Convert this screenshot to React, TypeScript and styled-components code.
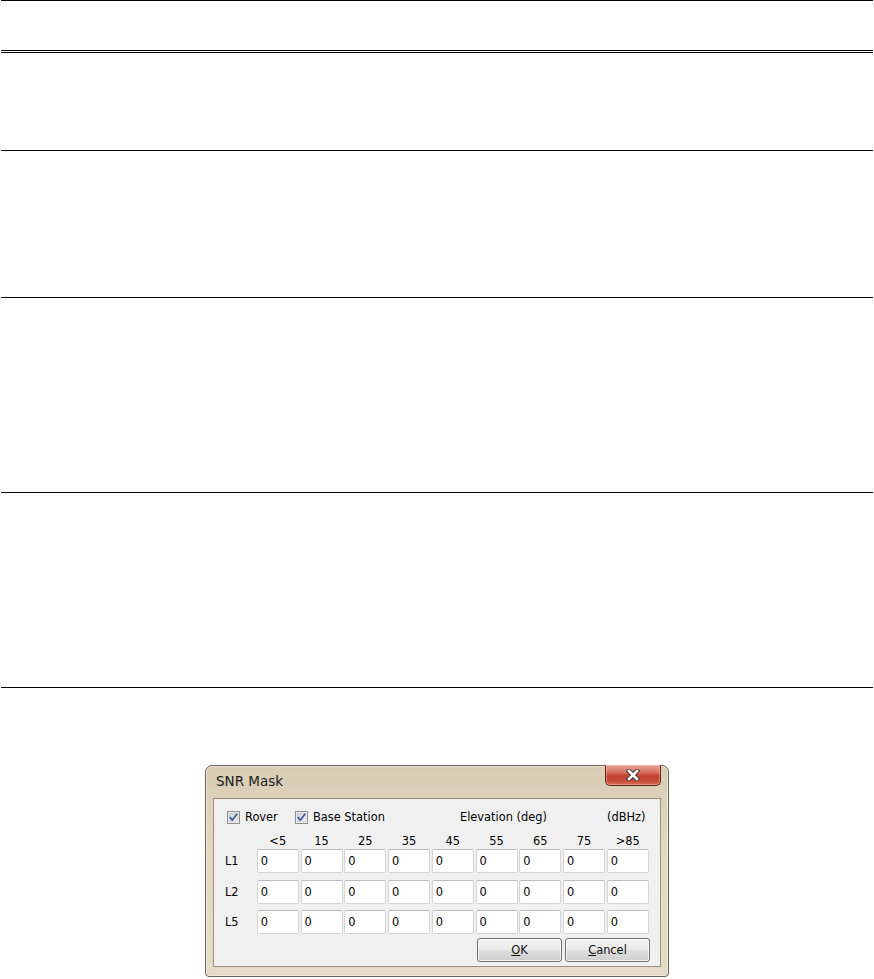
import React from 'react';
import styled, { createGlobalStyle } from 'styled-components';

const Global = createGlobalStyle`
  html, body {
    margin: 0;
    padding: 0;
    background: #ffffff;
  }
  body {
    font-family: "DejaVu Sans", "Liberation Sans", sans-serif;
    color: #000;
  }
`;

const Page = styled.div`
  width: 874px;
  height: 979px;
  overflow: hidden;
  background: #fff;
`;

const Sheet = styled.div`
  padding: 0 1px;
`;

const HeadRow = styled.div`
  height: 49px;
  border-top: 1px solid #000;
  border-bottom: 3px double #000;
`;

const Row = styled.div<{ $h: number }>`
  height: ${p => p.$h}px;
  border-bottom: 1px solid #000;
`;

const Figure = styled.div`
  display: flex;
  justify-content: center;
  padding-top: 77px;
`;

/* the Windows 7 dialog */
const Frame = styled.div`
  width: 464px;
  height: 212px;
  box-sizing: border-box;
  border: 1px solid #6f6453;
  border-radius: 7px 7px 4px 4px;
  background: linear-gradient(180deg, #d8ccb4 0%, #e2d8c4 40%, #e4dbc9 100%);
  box-shadow: inset 0 0 0 1px rgba(255, 255, 255, 0.45);
  padding: 0 7px 9px 7px;
  display: flex;
  flex-direction: column;
`;

const TitleBar = styled.div`
  height: 32px;
  display: flex;
  justify-content: space-between;
  align-items: flex-start;
`;

const Title = styled.div`
  padding: 7px 0 0 3px;
  font-family: "DejaVu Sans", sans-serif;
  font-size: 13.5px;
  color: #1b1b1b;
`;

const CloseBtn = styled.div`
  width: 56px;
  height: 21px;
  margin-top: -1px;
  box-sizing: border-box;
  border: 1px solid #5e2620;
  border-top: none;
  border-radius: 0 0 5px 5px;
  background: linear-gradient(180deg, #e9a797 0%, #d8725f 35%, #c2402e 55%, #c84a37 80%, #d9705a 100%);
  box-shadow: inset 0 0 0 1px rgba(255, 200, 190, 0.45);
  display: flex;
  align-items: center;
  justify-content: center;
`;

const Client = styled.div`
  flex: 1;
  box-sizing: border-box;
  border: 1px solid #9e9078;
  background: #f0f0f0;
  font-family: "DejaVu Sans", sans-serif;
  font-size: 11.4px;
  color: #000;
  display: flex;
  flex-direction: column;
`;

const CheckRow = styled.div`
  margin-top: 11px;
  height: 14px;
  padding-left: 13px;
  display: grid;
  grid-template-columns: 68px 165px 147px auto;
  align-items: center;
`;

const CheckItem = styled.label`
  display: flex;
  align-items: center;
  gap: 5px;
  white-space: nowrap;
`;

const Plain = styled.span`
  white-space: nowrap;
`;

const GridRow = styled.div<{ $top: number; $h: number }>`
  margin-top: ${p => p.$top}px;
  height: ${p => p.$h}px;
  padding-left: 11px;
  display: grid;
  grid-template-columns: 30px repeat(9, 42px);
  column-gap: 1.75px;
  align-items: center;
`;

const ColHead = styled.span`
  text-align: center;
  white-space: nowrap;
`;

const RowLabel = styled.span`
  white-space: nowrap;
`;

const Field = styled.div`
  height: 24px;
  box-sizing: border-box;
  border: 1px solid #d3d5d9;
  border-top-color: #b9bbc0;
  border-radius: 2px;
  background: #fff;
  padding-left: 3px;
  display: flex;
  align-items: center;
`;

const ButtonRow = styled.div`
  margin-top: 4px;
  padding-right: 10px;
  display: flex;
  justify-content: flex-end;
  gap: 3px;
`;

const Button = styled.div`
  width: 85px;
  height: 24px;
  box-sizing: border-box;
  border: 1px solid #707070;
  border-radius: 3px;
  background: linear-gradient(180deg, #f2f2f2 0%, #ebebeb 48%, #dddddd 52%, #cfcfcf 100%);
  box-shadow: inset 0 0 0 1px rgba(255, 255, 255, 0.7);
  display: flex;
  align-items: center;
  justify-content: center;
  color: #111;
`;

const Key = styled.span`
  text-decoration: underline;
`;

function CheckBox() {
  return (
    <svg width="13" height="13" viewBox="0 0 13 13">
      <rect x="0.5" y="0.5" width="12" height="12" fill="#fff" stroke="#8e8f8f" />
      <defs>
        <linearGradient id="cbg" x1="0" y1="0" x2="1" y2="1">
          <stop offset="0" stopColor="#cbcfd5" />
          <stop offset="1" stopColor="#f6f6f6" />
        </linearGradient>
      </defs>
      <rect x="2" y="2" width="9" height="9" fill="url(#cbg)" stroke="#b3b7bd" strokeWidth="0.6" />
      <path d="M3.2 6.6 L5.3 9.2 L9.8 3.2" fill="none" stroke="#3c5a99" strokeWidth="1.7" strokeLinecap="round" strokeLinejoin="round" />
    </svg>
  );
}

function CloseGlyph() {
  return (
    <svg width="14" height="12" viewBox="0 0 14 12">
      <path d="M3 2 L11 10 M11 2 L3 10" stroke="#4a3a38" strokeWidth="4.6" strokeLinecap="square" />
      <path d="M3 2 L11 10 M11 2 L3 10" stroke="#ffffff" strokeWidth="2.6" strokeLinecap="square" />
    </svg>
  );
}

const heads = ['<5', '15', '25', '35', '45', '55', '65', '75', '>85'];
const bands = ['L1', 'L2', 'L5'];
const rowTops = [1, 7, 6];

export default function App() {
  return (
    <Page>
      <Global />
      <Sheet>
        <HeadRow />
        <Row $h={97} />
        <Row $h={146} />
        <Row $h={194} />
        <Row $h={194} />
      </Sheet>
      <Figure>
        <Frame>
          <TitleBar>
            <Title>SNR Mask</Title>
            <CloseBtn>
              <CloseGlyph />
            </CloseBtn>
          </TitleBar>
          <Client>
            <CheckRow>
              <CheckItem><CheckBox />Rover</CheckItem>
              <CheckItem><CheckBox />Base Station</CheckItem>
              <Plain>Elevation (deg)</Plain>
              <Plain>(dBHz)</Plain>
            </CheckRow>
            <GridRow $top={10} $h={14}>
              <span />
              {heads.map(h => <ColHead key={h}>{h}</ColHead>)}
            </GridRow>
            {bands.map((b, i) => (
              <GridRow key={b} $top={rowTops[i]} $h={24}>
                <RowLabel>{b}</RowLabel>
                {heads.map(h => <Field key={h}>0</Field>)}
              </GridRow>
            ))}
            <ButtonRow>
              <Button><Key>O</Key>K</Button>
              <Button><Key>C</Key>ancel</Button>
            </ButtonRow>
          </Client>
        </Frame>
      </Figure>
    </Page>
  );
}
